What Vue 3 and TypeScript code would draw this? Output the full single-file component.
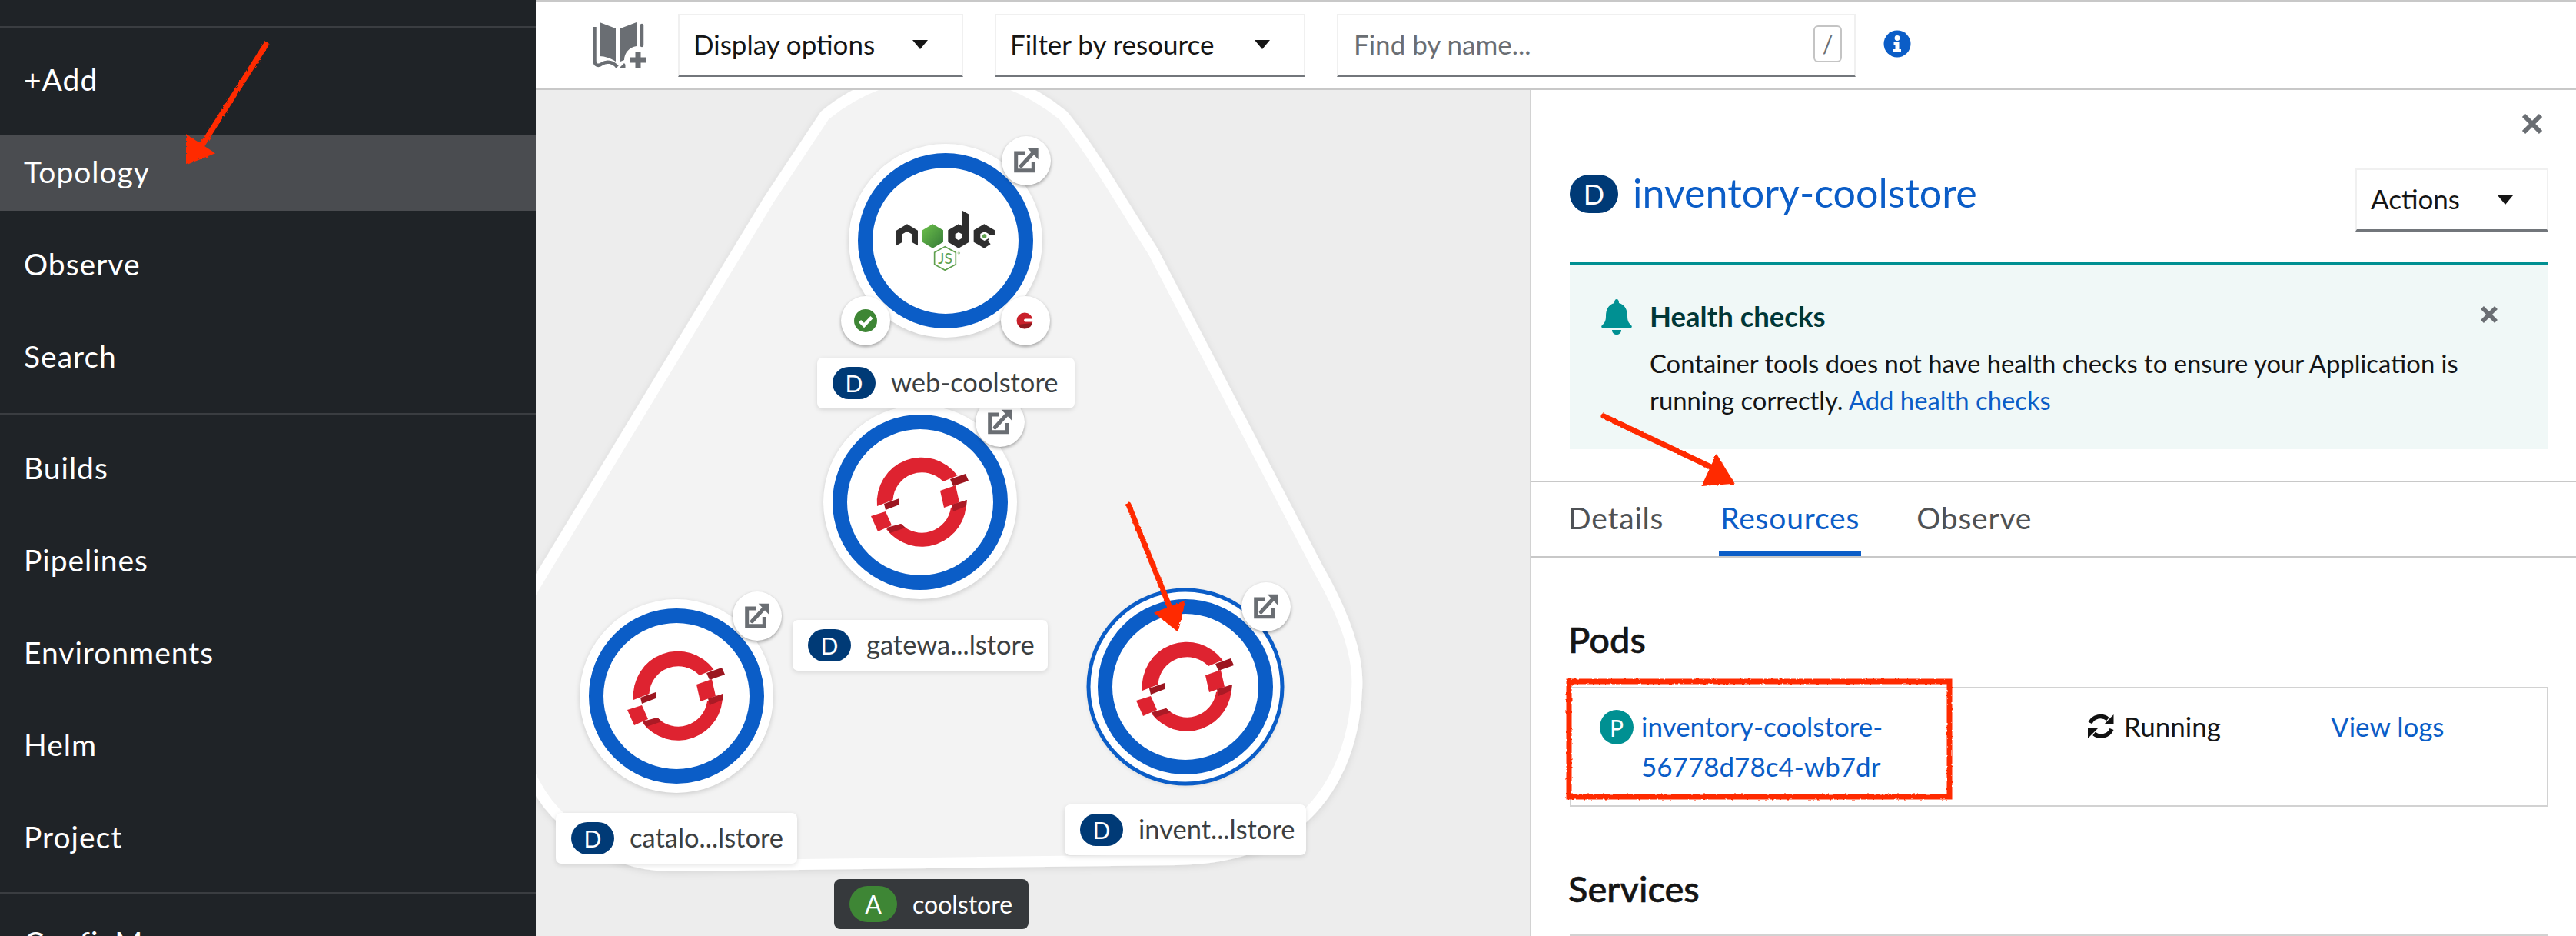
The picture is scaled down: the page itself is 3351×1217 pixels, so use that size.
<script setup lang="ts">
interface TopoNode {
  name: string;
  x: number;
  y: number;
  logo: 'node' | 'openshift';
  selected?: boolean;
  deco: [number, number];
  label: [number, number, number];
}

// canvas starts at 697,117 of the page
const originX = 697;
const originY = 117;

const topGroup = ['+Add', 'Topology', 'Observe', 'Search'];
const midGroup = ['Builds', 'Pipelines', 'Environments', 'Helm', 'Project'];

const nodes: TopoNode[] = [
  { name: 'web-coolstore', x: 1230, y: 313, logo: 'node', deco: [1335, 209], label: [1063, 465, 335] },
  { name: 'gatewa...lstore', x: 1197, y: 653, logo: 'openshift', deco: [1301, 549], label: [1031, 806, 332] },
  { name: 'catalo...lstore', x: 880, y: 905, logo: 'openshift', deco: [985, 801], label: [723, 1057, 314] },
  { name: 'invent...lstore', x: 1542, y: 893, logo: 'openshift', selected: true, deco: [1647, 789], label: [1385, 1046, 314] },
];

function nodeStyle(n: TopoNode) {
  return { left: `${n.x - originX - 130}px`, top: `${n.y - originY - 130}px` };
}
function decoStyle(x: number, y: number) {
  return { left: `${x - originX - 32}px`, top: `${y - originY - 32}px` };
}
function labelStyle(n: TopoNode) {
  return { left: `${n.label[0] - originX}px`, top: `${n.label[1] - originY}px`, width: `${n.label[2]}px` };
}
</script>

<template>
  <div class="page">
    <aside class="sidebar">
      <div class="nav-group nav-group--head"></div>
      <div class="nav-group">
        <div v-for="item in topGroup" :key="item" class="nav-item" :class="{ 'nav-item--active': item === 'Topology' }">{{ item }}</div>
      </div>
      <div class="nav-group">
        <div v-for="item in midGroup" :key="item" class="nav-item">{{ item }}</div>
      </div>
      <div class="nav-group nav-group--last">
        <div class="nav-item">ConfigMaps</div>
      </div>
    </aside>

    <div class="main">
      <header class="toolbar">
        <svg class="book" width="71" height="62" viewBox="0 0 71 62">
          <g fill="#6a6e73">
            <path d="M9 1 L30 9 V52 C24 48 16 45 9 45 Z" />
            <path d="M36 9 L57 1 V32 C48 33 41 41 41 50 L36 52 Z" />
            <path d="M36 59 L41 54 L42.500 56 L42.500 61 H36 Z" />
          </g>
          <path d="M2.500 7 V50 C2.500 58 8 58 12 55 C18 51 26 52 32 59" fill="none" stroke="#6a6e73" stroke-width="4.500" />
          <path d="M64 5 V31" fill="none" stroke="#6a6e73" stroke-width="4.500" stroke-linecap="round" />
          <path d="M59 40 V60 M48 50 H70" stroke="#6a6e73" stroke-width="7" />
        </svg>
        <button class="select select--display"><span>Display options</span><i class="caret"></i></button>
        <button class="select select--filter"><span>Filter by resource</span><i class="caret"></i></button>
        <div class="find">
          <span class="find__text">Find by name...</span>
          <span class="find__key">/</span>
        </div>
        <svg class="info" width="36" height="36" viewBox="0 0 36 36">
          <circle cx="18" cy="18" r="17.500" fill="#0b5dc7" />
          <circle cx="18" cy="10.500" r="3.400" fill="#fff" />
          <path d="M13.500 15.500 H20.500 V25 H23 V29 H13 V25 H15.500 V19 H13.500 Z" fill="#fff" />
        </svg>
      </header>

      <div class="content">
        <section class="canvas">
          <svg class="group" width="1293" height="1100" viewBox="697 117 1293 1100">
            <defs>
              <filter id="groupShadow" x="-5%" y="-5%" width="110%" height="110%">
                <feDropShadow dx="0" dy="2" stdDeviation="5" flood-color="#000" flood-opacity="0.1" />
              </filter>
            </defs>
            <path
              d="M1230 92 C1285 92 1340 115 1383 150 C1420 195 1460 265 1500 327 L1715 740 C1755 810 1768 860 1765 897 C1762 970 1735 1030 1690 1068 C1650 1100 1600 1117 1530 1118 L873 1126 C810 1126 760 1095 723 1057 C660 990 640 850 697 760 L1000 260 L1073 150 C1115 115 1175 92 1230 92 Z"
              fill="#f3f3f3"
              stroke="#fff"
              stroke-width="14"
              filter="url(#groupShadow)"
            />
          </svg>

          <div v-for="n in nodes" :key="n.name" class="node" :style="nodeStyle(n)">
            <svg width="260" height="260" viewBox="-130 -130 260 260">
              <circle r="126" fill="#fff" class="node__disc" />
              <circle v-if="n.selected" r="126" fill="none" stroke="#0b5dc7" stroke-width="5" />
              <circle r="104.500" fill="none" stroke="#0b5dc7" stroke-width="19" />
              <g v-if="n.logo === 'openshift'" transform="translate(2,0)">
                <path d="M-58 5 A58 58 0 0 1 46.500 -34.700 L28 -27 A38 38 0 0 0 -37.500 -3 Z" fill="#de2330" />
                <path d="M58 -3 A58 58 0 0 1 -46 35 L-27 28 A38 38 0 0 0 38 7 Z" fill="#de2330" />
                <path d="M24 -15 L44 -22 L49 0 L29 7 Z" fill="#de2330" />
                <path d="M-66 18 L-47 12 L-39 30 L-57 38 Z" fill="#de2330" />
                <path d="M37 -30 L57 -37 L61 -28 L41 -21 Z" fill="#9c1620" />
                <path d="M-49 2 L-29 -5 L-29 3 L-47 10 Z" fill="#9c1620" />
                <path d="M39 3 L59 -3 L58 5 L41 12 Z" fill="#ab1a25" />
                <path d="M-46 33 L-27 28 L-21 33 L-41 40 Z" fill="#ab1a25" />
              </g>
              <g v-else transform="translate(-230,-162.670) scale(0.3333)">
                <defs>
                  <linearGradient id="nodeGreen" x1="0" y1="0" x2="1" y2="1">
                    <stop offset="0" stop-color="#6cc04a" />
                    <stop offset="1" stop-color="#357a38" />
                  </linearGradient>
                </defs>
                <path d="M498 448 L540 423 L582 448 V507 L558 493 V462 L540 451 L522 462 V493 L498 507 Z" fill="#2e2e2e" />
                <path d="M640 423 L681 447 V493 L640 517 L600 493 V447 Z" fill="url(#nodeGreen)" />
                <path fill-rule="evenodd" d="M755 370 L782 385 V493 L741 517 L700 493 V447 L741 423 L755 431 Z M741 455 L728 462 V478 L741 486 L754 478 V462 Z" fill="#2e2e2e" />
                <path d="M800 447 L841 423 L882 447 V472 L854 488 L866 501 L841 517 L800 493 Z" fill="#2e2e2e" />
                <path d="M842 452 L858 461 V479 L842 488 L826 479 V461 Z" fill="#fff" />
                <path d="M854 464 H884 V478 L862 490 Z" fill="#fff" />
                <path d="M842 461 L850 465.500 V474.500 L842 479 L834 474.500 V465.500 Z" fill="#5fa04e" />
                <path d="M688 511 L730 534 V580 L688 603 L647 580 V534 Z" fill="none" stroke="#5fa04e" stroke-width="5" />
                <text x="689" y="578" text-anchor="middle" class="js-text">JS</text>
                <circle cx="742" cy="536" r="4" fill="none" stroke="#5fa04e" stroke-width="1.500" />
              </g>
            </svg>
          </div>

          <div v-for="n in nodes" :key="n.name + '-deco'" class="deco" :style="decoStyle(n.deco[0], n.deco[1])">
            <svg width="64" height="64" viewBox="0 0 64 64">
              <path d="M30.300 22 H18.700 V44.700 H41.300 V33" fill="none" stroke="#6a6e73" stroke-width="5" />
              <path d="M25.300 38.700 L43.700 18.700" fill="none" stroke="#6a6e73" stroke-width="5" stroke-linecap="round" />
              <path d="M33.700 15.700 H47.700 V30.300 Z" fill="#6a6e73" />
            </svg>
          </div>

          <!-- decorators of the node pod only -->
          <div class="deco" :style="decoStyle(1126, 417)">
            <svg width="64" height="64" viewBox="0 0 64 64">
              <circle cx="32" cy="32" r="15" fill="#3e8635" />
              <path d="M24.500 32.500 L30 38 L40 27.500" fill="none" stroke="#fff" stroke-width="4.500" />
            </svg>
          </div>
          <div class="deco" :style="decoStyle(1334, 417)">
            <svg width="64" height="64" viewBox="0 0 64 64">
              <circle cx="31" cy="32" r="10.500" fill="#c9202a" />
              <path d="M22 37 A10.500 10.500 0 0 0 41 35 Z" fill="#8f1a1f" />
              <path d="M32 29.500 H43 V33.500 H32 A2 2 0 0 1 32 29.500 Z" fill="#fff" />
            </svg>
          </div>

          <div v-for="n in nodes" :key="n.name + '-label'" class="tag" :style="labelStyle(n)">
            <span class="tag__badge">D</span>
            <span class="tag__text">{{ n.name }}</span>
          </div>

          <div class="app-tag" :style="labelStyle({ ...nodes[0], label: [1085, 1143, 253] })">
            <span class="app-tag__badge">A</span>
            <span class="app-tag__text">coolstore</span>
          </div>
        </section>

        <section class="panel">
          <div class="panel__body">
            <div class="panel__close">
              <svg width="28" height="28" viewBox="0 0 28 28"><path d="M3 3 L25 25 M25 3 L3 25" stroke="#6a6e73" stroke-width="6" /></svg>
            </div>
            <div class="panel__title-row">
              <div class="panel__title">
                <span class="title-badge">D</span>
                <span class="title-link">inventory-coolstore</span>
              </div>
              <button class="select select--actions"><span>Actions</span><i class="caret"></i></button>
            </div>
            <div class="alert">
              <svg class="alert__bell" width="40" height="46" viewBox="0 0 40 46">
                <path d="M20 0 C22 0 23 2 23 5 C31 7 34 14 34 22 C34 29 36 31 39 34 C40.500 35 40 38 37 38 H3 C0 38 -0.500 35 1 34 C4 31 6 29 6 22 C6 14 9 7 17 5 C17 2 18 0 20 0 Z" fill="#009092" />
                <path d="M14 40 H26 C26 44 23 46 20 46 C17 46 14 44 14 40 Z" fill="#009092" />
              </svg>
              <div class="alert__content">
                <div class="alert__title">Health checks</div>
                <p class="alert__text">Container tools does not have health checks to ensure your Application is<br />running correctly. <a class="link">Add health checks</a></p>
              </div>
              <svg class="alert__close" width="24" height="24" viewBox="0 0 24 24"><path d="M3 3 L21 21 M21 3 L3 21" stroke="#6a6e73" stroke-width="5.500" /></svg>
            </div>
          </div>

          <nav class="tabs">
            <span class="tab">Details</span>
            <span class="tab tab--active">Resources</span>
            <span class="tab">Observe</span>
          </nav>

          <div class="panel__body">
            <h2 class="section-title section-title--pods">Pods</h2>
            <div class="pod-row">
              <div class="pod-name">
                <span class="pod-badge">P</span>
                <a class="link">inventory-coolstore-<br />56778d78c4-wb7dr</a>
              </div>
              <div class="pod-status">
                <svg width="36" height="36" viewBox="0 0 36 36">
                  <path d="M4 14 A15 15 0 0 1 27 9" fill="none" stroke="#111" stroke-width="5.500" />
                  <path d="M34.500 3 V16 H22 Z" fill="#111" />
                  <path d="M32 22 A15 15 0 0 1 9 28" fill="none" stroke="#111" stroke-width="5.500" />
                  <path d="M1 21 H14 L1 34 Z" fill="#111" />
                </svg>
                <span>Running</span>
              </div>
              <a class="link pod-logs">View logs</a>
            </div>
            <h2 class="section-title section-title--services">Services</h2>
            <div class="services-box"></div>
          </div>
        </section>
      </div>
    </div>

    <!-- hand-drawn red annotations over the screenshot -->
    <svg class="marks" width="3351" height="1217" viewBox="0 0 3351 1217">
      <defs>
        <filter id="rough" x="-5%" y="-5%" width="110%" height="110%">
          <feTurbulence type="fractalNoise" baseFrequency="0.25" numOctaves="2" seed="4" result="noise" />
          <feDisplacementMap in="SourceGraphic" in2="noise" scale="3" />
        </filter>
      </defs>
      <g filter="url(#rough)" fill="#ff2a00" stroke="#ff2a00">
        <path d="M346 58 L257 198" fill="none" stroke-width="7" stroke-linecap="round" />
        <path d="M243 176 L278 199 L243 213 Z" stroke-width="2" />
        <path d="M2086 541 L2236 612" fill="none" stroke-width="7" stroke-linecap="round" />
        <path d="M2233 592 L2255 628 L2215 631 Z" stroke-width="2" />
        <path d="M1468 656 L1522 790" fill="none" stroke-width="7" stroke-linecap="round" />
        <path d="M1503 797 L1541 782 L1532 820 Z" stroke-width="2" />
        <rect x="2041" y="886" width="495" height="150" fill="none" stroke-width="7" />
      </g>
    </svg>
  </div>
</template>

<style>
html,
body {
  margin: 0;
  background: #fff;
}
</style>

<style scoped>
.page {
  position: relative;
  display: flex;
  width: 3351px;
  height: 1217px;
  overflow: hidden;
  font-family: 'Lato', 'Open Sans', sans-serif;
  color: #151515;
}

/* Sidebar */
.sidebar {
  width: 697px;
  flex: none;
  background: #1f2327;
  color: #fff;
  font-size: 39px;
  letter-spacing: 1px;
  overflow: hidden;
}
.nav-group {
  padding: 18px 0 0;
  border-bottom: 3px solid #3a3d41;
  height: 500px;
  box-sizing: border-box;
}
.nav-group:nth-child(2) {
  height: 503px;
}
.nav-group:nth-child(3) {
  height: 623px;
  padding-top: 20px;
}
.nav-group--head {
  height: 37px;
  padding: 0;
}
.nav-group--last {
  border-bottom: 0;
  padding-top: 14px;
}
.nav-item {
  box-sizing: border-box;
  height: 99px;
  margin-bottom: 21px;
  padding: 0 0 3px 31px;
  display: flex;
  align-items: center;
}
.nav-item--active {
  background: #4a4c50;
}

/* Main area */
.main {
  flex: 1;
  min-width: 0;
  display: flex;
  flex-direction: column;
}
.toolbar {
  height: 117px;
  box-sizing: border-box;
  flex: none;
  display: flex;
  align-items: center;
  border-top: 3px solid #c8c8c8;
  border-bottom: 3px solid #c8c8c8;
  padding-left: 74px;
}
.book {
  margin-right: 40px;
  flex: none;
}
.select {
  display: flex;
  align-items: center;
  justify-content: space-between;
  box-sizing: border-box;
  height: 82px;
  padding: 0 44px 0 18px;
  background: #fff;
  border: 2px solid #f0f0f0;
  border-bottom: 3px solid #72767b;
  font: inherit;
  font-size: 35px;
  color: #151515;
}
.select span {
  margin-top: -3px;
}
.select--display {
  width: 371px;
  margin-right: 41px;
}
.select--filter {
  width: 404px;
  margin-right: 41px;
}
.select--actions {
  width: 251px;
}
.caret {
  width: 0;
  height: 0;
  border-left: 10.500px solid transparent;
  border-right: 10.500px solid transparent;
  border-top: 12px solid #151515;
}
.find {
  display: flex;
  align-items: center;
  justify-content: space-between;
  box-sizing: border-box;
  width: 675px;
  height: 82px;
  padding: 0 16px 0 20px;
  border: 2px solid #f0f0f0;
  border-bottom: 3px solid #72767b;
  font-size: 35px;
  color: #6a6e73;
}
.find__text {
  margin-top: -3px;
}
.find__key {
  width: 37px;
  height: 48px;
  box-sizing: border-box;
  border: 2.500px solid #c4c4c4;
  border-radius: 6px;
  display: flex;
  align-items: center;
  justify-content: center;
  font-size: 30px;
  color: #6a6e73;
  margin-top: -3px;
}
.info {
  margin-left: 36px;
  margin-top: -4px;
  flex: none;
}

.content {
  flex: 1;
  min-height: 0;
  display: flex;
}

/* Topology canvas */
.canvas {
  position: relative;
  width: 1293px;
  flex: none;
  background: #ededed;
  overflow: hidden;
}
.group {
  position: absolute;
  left: 0;
  top: 0;
}
.node {
  position: absolute;
  width: 260px;
  height: 260px;
}
.node svg {
  display: block;
  overflow: visible;
}
.node__disc {
  filter: drop-shadow(0 2px 3px rgba(0, 0, 0, 0.16));
}
.js-text {
  font-family: 'Lato', sans-serif;
  font-size: 58px;
  fill: #5fa04e;
}
.deco {
  position: absolute;
  width: 64px;
  height: 64px;
  border-radius: 50%;
  background: #fff;
  box-shadow: 0 2px 4px rgba(0, 0, 0, 0.35);
}
.deco svg {
  display: block;
}
.tag {
  position: absolute;
  box-sizing: border-box;
  height: 66px;
  display: flex;
  align-items: center;
  gap: 20px;
  padding-left: 20px;
  background: #fff;
  border-radius: 7px;
  box-shadow: 0 2px 6px rgba(0, 0, 0, 0.12);
}
.tag__badge {
  width: 56px;
  height: 42px;
  border-radius: 21px;
  background: #003a76;
  color: #fff;
  font-size: 30px;
  display: flex;
  align-items: center;
  justify-content: center;
}
.tag__text {
  font-size: 34.500px;
  color: #3c3f42;
  margin-top: -3px;
}
.app-tag {
  position: absolute;
  box-sizing: border-box;
  height: 65px;
  display: flex;
  align-items: center;
  gap: 20px;
  padding-left: 20px;
  background: #36393c;
  border-radius: 8px;
}
.app-tag__badge {
  width: 62px;
  height: 47px;
  border-radius: 24px;
  background: #3e8635;
  color: #fff;
  font-size: 32px;
  display: flex;
  align-items: center;
  justify-content: center;
}
.app-tag__text {
  color: #fff;
  font-size: 32px;
}

/* Side panel */
.panel {
  flex: 1;
  min-width: 0;
  box-sizing: border-box;
  border-left: 2px solid #d2d2d2;
}
.panel__body {
  padding: 0 36px 0 50px;
}
.panel__close {
  display: flex;
  justify-content: flex-end;
  padding: 30px 7px 0 0;
  height: 72px;
  box-sizing: border-box;
  margin-bottom: 30px;
}
.panel__title-row {
  display: flex;
  justify-content: space-between;
  height: 82px;
  margin-bottom: 40px;
}
.panel__title {
  display: flex;
  align-items: center;
  gap: 19px;
  height: 66px;
}
.title-badge {
  width: 63px;
  height: 50px;
  border-radius: 25px;
  background: #003a76;
  color: #fff;
  font-size: 36px;
  display: flex;
  align-items: center;
  justify-content: center;
}
.title-link {
  font-size: 52px;
  color: #0b5dc7;
  margin-top: -5px;
}
.link {
  color: #0b5dc7;
}
.alert {
  position: relative;
  display: flex;
  box-sizing: border-box;
  height: 243px;
  background: #f0f8f7;
  border-top: 4px solid #009092;
  padding: 44px 0 0 41px;
}
.alert__bell {
  flex: none;
  margin-right: 23px;
}
.alert__content {
  width: 1080px;
}
.alert__title {
  font-size: 36.500px;
  font-weight: 700;
  color: #003737;
  line-height: 48px;
  margin-top: -2px;
  margin-bottom: 14px;
}
.alert__text {
  margin: 0;
  font-size: 32.800px;
  line-height: 48px;
}
.alert__close {
  position: absolute;
  top: 52px;
  right: 65px;
}
.tabs {
  display: flex;
  gap: 74px;
  box-sizing: border-box;
  height: 100px;
  margin-top: 41px;
  padding-left: 48px;
  border-top: 2px solid #c8c8c8;
  border-bottom: 2px solid #c8c8c8;
}
.tab {
  position: relative;
  font-size: 39px;
  letter-spacing: 0.8px;
  line-height: 92px;
  color: #4f5255;
}
.tab--active {
  color: #0b5dc7;
}
.tab--active::after {
  content: '';
  position: absolute;
  left: -2px;
  right: -2px;
  bottom: 0;
  height: 6px;
  background: #0b5dc7;
}
.section-title {
  margin: 0 0 0 -2px;
  font-size: 47px;
  font-weight: 500;
  -webkit-text-stroke: 0.6px #151515;
  color: #151515;
  line-height: 56px;
}
.section-title--pods {
  padding-top: 78px;
  margin-bottom: 34px;
}
.section-title--services {
  padding-top: 78px;
  margin-bottom: 32px;
}
.pod-row {
  display: grid;
  grid-template-columns: 634px 317px 1fr;
  box-sizing: border-box;
  height: 156px;
  padding: 23px 0 0 37px;
  border: 2px solid #d2d2d2;
  font-size: 35px;
  line-height: 52px;
}
.pod-name {
  display: flex;
  gap: 10px;
}
.pod-badge {
  flex: none;
  width: 44px;
  height: 45px;
  margin-top: 5px;
  border-radius: 50%;
  background: #009092;
  color: #fff;
  font-size: 30px;
  display: flex;
  align-items: center;
  justify-content: center;
}
.pod-status {
  display: flex;
  gap: 12px;
  height: 52px;
  align-items: center;
}
.services-box {
  border-top: 2px solid #d2d2d2;
  height: 10px;
}

/* Annotations */
.marks {
  position: absolute;
  left: 0;
  top: 0;
  pointer-events: none;
}
</style>
